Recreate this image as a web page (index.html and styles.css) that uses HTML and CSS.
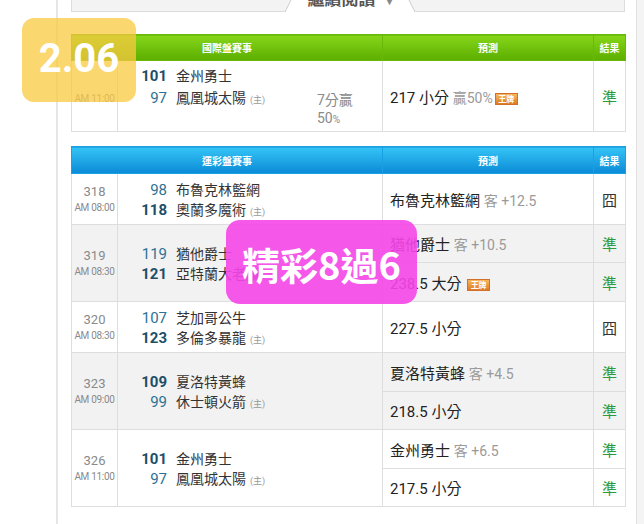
FILE: index.html
```html
<!DOCTYPE html>
<html lang="zh-Hant">
<head>
<meta charset="utf-8">
<title>賽事預測</title>
<link rel="stylesheet" href="styles.css">
</head>
<body>
<div class="page">
  <div class="gutter-left"></div>
  <main class="main">
    <div class="tabbar">
      <div class="tab">
        <svg class="tab-shape" viewBox="0 0 130 34" preserveAspectRatio="none"><path d="M16 0 L0 34 L130 34 L114 0 Z" fill="#fff"/><path d="M16 0 L0 34 M114 0 L130 34" stroke="#c9c9c9" fill="none"/></svg>
        <span class="tab-label">繼續閱讀 <span class="caret">▾</span></span>
      </div>
    </div>

    <table class="games intl">
      <colgroup><col class="c1"><col class="c2"><col class="c3"><col class="c4"></colgroup>
      <thead><tr class="hd"><th colspan="2">國際盤賽事</th><th>預測</th><th>結果</th></tr></thead>
      <tbody>
        <tr class="h71">
          <td class="info"><span class="time time-low">AM 11:00</span></td>
          <td>
            <div class="teams teams-top">
              <div class="team-grid">
                <span class="num b">101</span><span class="name">金州勇士</span>
                <span class="num">97</span><span class="name">鳳凰城太陽<span class="home">(主)</span></span>
              </div>
              <div class="note">7分贏 50<span class="pct">%</span></div>
            </div>
          </td>
          <td class="pred">217 小分 <span class="sub">贏50%</span><span class="ace">王牌</span></td>
          <td class="res ok">準</td>
        </tr>
      </tbody>
    </table>

    <table class="games lottery">
      <colgroup><col class="c1"><col class="c2"><col class="c3"><col class="c4"></colgroup>
      <thead><tr class="hd2"><th colspan="2">運彩盤賽事</th><th>預測</th><th>結果</th></tr></thead>
      <tbody>
        <tr class="h51">
          <td class="info"><span class="gid">318</span><span class="time">AM 08:00</span></td>
          <td><div class="team-grid"><span class="num">98</span><span class="name">布魯克林籃網</span><span class="num b">118</span><span class="name">奧蘭多魔術<span class="home">(主)</span></span></div></td>
          <td class="pred">布魯克林籃網 <span class="sub">客 +12.5</span></td>
          <td class="res fail">囧</td>
        </tr>
        <tr class="alt h38">
          <td class="info" rowspan="2"><span class="gid">319</span><span class="time">AM 08:30</span></td>
          <td rowspan="2"><div class="team-grid"><span class="num">119</span><span class="name">猶他爵士</span><span class="num b">121</span><span class="name">亞特蘭大老鷹<span class="home">(主)</span></span></div></td>
          <td class="pred">猶他爵士 <span class="sub">客 +10.5</span></td>
          <td class="res ok">準</td>
        </tr>
        <tr class="alt h39">
          <td class="pred">238.5 大分 <span class="ace">王牌</span></td>
          <td class="res ok">準</td>
        </tr>
        <tr class="h51">
          <td class="info"><span class="gid">320</span><span class="time">AM 08:30</span></td>
          <td><div class="team-grid"><span class="num">107</span><span class="name">芝加哥公牛</span><span class="num b">123</span><span class="name">多倫多暴龍<span class="home">(主)</span></span></div></td>
          <td class="pred">227.5 小分</td>
          <td class="res fail">囧</td>
        </tr>
        <tr class="alt h39">
          <td class="info" rowspan="2"><span class="gid">323</span><span class="time">AM 09:00</span></td>
          <td rowspan="2"><div class="team-grid"><span class="num b">109</span><span class="name">夏洛特黃蜂</span><span class="num">99</span><span class="name">休士頓火箭<span class="home">(主)</span></span></div></td>
          <td class="pred">夏洛特黃蜂 <span class="sub">客 +4.5</span></td>
          <td class="res ok">準</td>
        </tr>
        <tr class="alt h38">
          <td class="pred">218.5 小分</td>
          <td class="res ok">準</td>
        </tr>
        <tr class="h39">
          <td class="info" rowspan="2"><span class="gid">326</span><span class="time">AM 11:00</span></td>
          <td rowspan="2"><div class="team-grid"><span class="num b">101</span><span class="name">金州勇士</span><span class="num">97</span><span class="name">鳳凰城太陽<span class="home">(主)</span></span></div></td>
          <td class="pred">金州勇士 <span class="sub">客 +6.5</span></td>
          <td class="res ok">準</td>
        </tr>
        <tr class="h38">
          <td class="pred">217.5 小分</td>
          <td class="res ok">準</td>
        </tr>
      </tbody>
    </table>
  </main>
  <div class="gutter-right"></div>
</div>

<div class="odds-badge">2.06</div>
<div class="hit-badge">精彩8過6</div>
</body>
</html>
```

FILE: styles.css
```css
* { box-sizing: border-box; }
html, body { margin: 0; padding: 0; }
body {
  font-family: Roboto, "Noto Sans CJK TC", sans-serif;
  background: #fff;
  position: relative;
  width: 644px;
  height: 524px;
  overflow: hidden;
}
.page { display: flex; min-height: 524px; }
.gutter-left { width: 56px; flex: none; }
.main {
  width: 581px;
  flex: none;
  border-left: 2px solid #e6e6e6;
  border-right: 1px solid #e2e2e2;
  padding: 0 11px 0 13px;
}
.gutter-right { flex: 1; background: #f4f4f4; }

/* top tab bar */
.tabbar {
  position: relative;
  height: 32px;
  margin-top: -20px;
  background: #f3f3f3;
  border: 1px solid #dcdcdc;
  border-top: 0;
}
.tab {
  position: absolute;
  left: 213px;
  width: 130px;
  top: 0;
  bottom: -1px;
  display: flex;
  align-items: center;
  justify-content: center;
}
.tab-shape { position: absolute; left: 0; top: 0; width: 100%; height: 100%; }
.tab-label {
  position: relative;
  font-family: "Noto Sans CJK TC", sans-serif;
  font-size: 17px;
  font-weight: 700;
  color: #555;
  padding-top: 2px;
}
.caret { font-size: 10px; color: #888; margin-left: 8px; }

/* tables */
.games {
  width: 554px;
  border-collapse: collapse;
  table-layout: fixed;
}
.intl { margin-top: 22px; }
.lottery { margin-top: 14px; }
.c1 { width: 46px; }
.c2 { width: 265px; }
.c3 { width: 211px; }
.c4 { width: 32px; }
.games td { border: 1px solid #dedede; padding: 0; vertical-align: middle; }
.games th {
  padding: 0;
  color: #fff;
  font-family: "Noto Sans CJK TC", sans-serif;
  font-size: 10px;
  font-weight: 700;
  text-align: center;
}
.hd { height: 26px; }
.hd th {
  background: linear-gradient(#86d61a, #5cae00);
  border: 1px solid #6ab90a;
  border-left-color: #b2e270;
}
.hd th:first-child { border-left-color: #6ab90a; }
.hd2 { height: 27px; }
.hd2 th {
  background: linear-gradient(#35c4f6, #0b8ad6);
  border: 1px solid #1aa0e4;
  border-left-color: #8ed7f7;
}
.hd2 th:first-child { border-left-color: #1aa0e4; }

.h71 { height: 71px; }
.h51 { height: 51px; }
.h38 { height: 38px; }
.h39 { height: 39px; }
.alt td { background: #f2f2f2; }

.info { text-align: center; color: #8a8a8a; }
.gid { display: block; font-size: 13px; line-height: 17px; }
.time { display: block; font-size: 10px; line-height: 16px; letter-spacing: -0.3px; }
.time-low { padding-top: 5px; }

.team-grid {
  display: grid;
  grid-template-columns: 49px auto;
  column-gap: 9px;
  line-height: 20px;
  padding-top: 3px;
}
.num { text-align: right; font-size: 15px; color: #2d7294; }
.num.b { font-weight: 700; color: #1d4f68; }
.name { font-size: 14px; color: #333; }
.home { font-size: 9px; color: #999; margin-left: 4px; }

.teams-top {
  display: flex;
  justify-content: space-between;
  height: 69px;
  padding: 3px 0 2px;
}
.teams-top .team-grid { line-height: 22px; align-self: flex-start; padding-top: 0; }
.note {
  align-self: flex-end;
  width: 44px;
  margin-right: 21px;
  font-size: 14px;
  line-height: 18px;
  color: #8a8a8a;
}
.pct { font-size: 10px; }

.pred { padding-left: 7px !important; font-size: 15px; color: #222; white-space: nowrap; }
.sub { color: #9a9a9a; font-size: 14px; }
.ace {
  display: inline-block;
  vertical-align: 1px;
  width: 23px;
  height: 12px;
  margin-left: 2px;
  background: linear-gradient(#f7b860, #df7a22);
  border: 1px solid #d0702a;
  color: #fff;
  font-family: "Noto Sans CJK TC", sans-serif;
  font-size: 8px;
  line-height: 10px;
  text-align: center;
  font-weight: 700;
}
.res { text-align: center; font-size: 15px; }
.ok { color: #2c9a3d; }
.fail { color: #333; }

/* overlays */
.odds-badge {
  position: absolute;
  left: 22px;
  top: 18px;
  width: 114px;
  height: 84px;
  border-radius: 12px;
  background: rgba(249, 201, 64, 0.75);
  color: #fff;
  font-family: Roboto, sans-serif;
  font-weight: 700;
  font-size: 40px;
  display: flex;
  align-items: center;
  justify-content: center;
  padding-bottom: 4px;
}
.hit-badge {
  position: absolute;
  left: 226px;
  top: 220px;
  width: 191px;
  height: 84px;
  border-radius: 14px;
  background: rgba(245, 70, 232, 0.9);
  color: #fff;
  font-family: "Noto Sans CJK TC", sans-serif;
  font-weight: 700;
  font-size: 38px;
  display: flex;
  align-items: center;
  justify-content: center;
  padding-top: 2px;
}
```
